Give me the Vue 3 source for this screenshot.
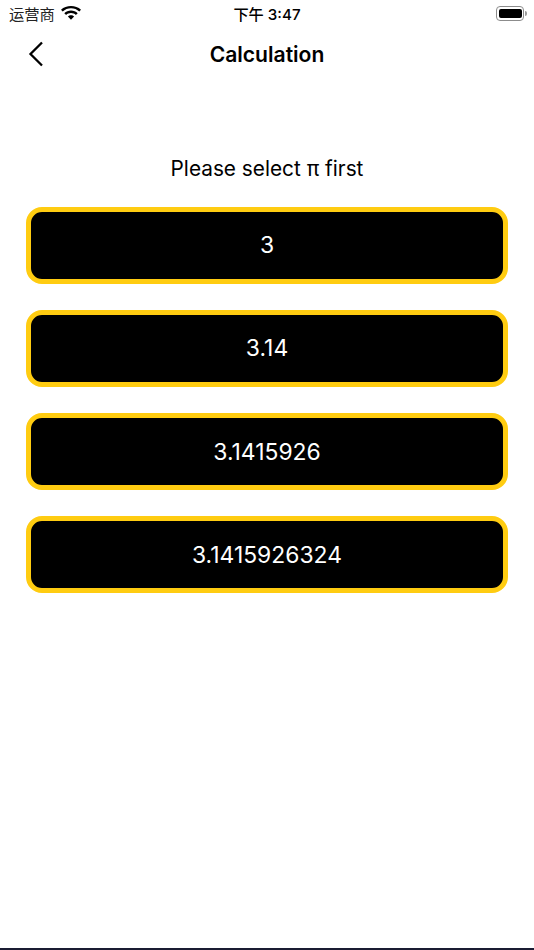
<script setup>
const options = ['3', '3.14', '3.1415926', '3.1415926324']
</script>

<template>
  <div class="screen">
    <div class="status">
      <div class="status-left">
        <span class="carrier">运营商</span>
        <svg class="wifi" width="20" height="15" viewBox="0 0 20 15">
          <path d="M10 2.2c3.2 0 6.1 1.2 8.3 3.3L20 3.7C17.3 1.2 13.800 0 10 0S2.700 1.200 0 3.700l1.700 1.800C3.900 3.400 6.800 2.200 10 2.200z" fill="#000"/>
          <path d="M10 7.100c1.900 0 3.600.7 4.900 1.900l1.800-1.800C14.900 5.500 12.600 4.600 10 4.600s-4.900.9-6.700 2.600L5.100 9c1.300-1.200 3-1.900 4.900-1.900z" fill="#000"/>
          <path d="M10 9.300c-1.200 0-2.300.5-3.100 1.200L10 13.800l3.100-3.300c-.8-.7-1.900-1.200-3.100-1.200z" fill="#000"/>
        </svg>
      </div>
      <span class="time">下午 3:47</span>
      <div class="battery"><span class="battery-fill"></span></div>
    </div>

    <header class="nav">
      <svg class="back" width="16" height="26" viewBox="0 0 16 26">
        <path d="M14 1.500 2.500 13 14 24.500" fill="none" stroke="#000" stroke-width="2.300"/>
      </svg>
      <h1 class="title">Calculation</h1>
    </header>

    <main class="content">
      <p class="prompt">Please select π first</p>
      <div class="options">
        <button v-for="option in options" :key="option" class="option">{{ option }}</button>
      </div>
    </main>

    <div class="home-line"></div>
  </div>
</template>

<style scoped>
.screen {
  width: 534px;
  height: 950px;
  background: #fff;
  display: flex;
  flex-direction: column;
  font-family: Inter, "Noto Sans CJK SC", sans-serif;
  color: #000;
  overflow: hidden;
}
.status {
  height: 27px;
  display: grid;
  grid-template-columns: 1fr auto 1fr;
  align-items: center;
  padding: 0 10px;
}
.status-left {
  display: flex;
  align-items: center;
  gap: 6px;
}
.carrier {
  font-size: 15.300px;
  color: #222;
  margin: -2px 0 0 -1px;
}
.wifi {
  margin-top: 0;
}
.time {
  font-size: 15.200px;
  font-weight: 500;
  margin-top: -1px;
}
.battery {
  justify-self: end;
  width: 28px;
  height: 14.500px;
  box-sizing: border-box;
  border: 1.500px solid #8c8c8c;
  border-radius: 4px;
  padding: 1.500px;
  position: relative;
}
.battery::after {
  content: "";
  position: absolute;
  right: -4px;
  top: 3.500px;
  width: 2px;
  height: 5px;
  background: #9a9a9a;
  border-radius: 0 2px 2px 0;
}
.battery-fill {
  display: block;
  height: 100%;
  background: #000;
  border-radius: 2px;
}
.nav {
  height: 54px;
  display: flex;
  align-items: center;
  justify-content: center;
  position: relative;
}
.back {
  position: absolute;
  left: 28px;
  top: 14px;
}
.title {
  margin: 0;
  font-size: 21.100px;
  font-weight: 600;
}
.content {
  flex: 1;
  padding: 0 26px;
  display: flex;
  flex-direction: column;
}
.prompt {
  margin: 74px 0 0;
  height: 27px;
  line-height: 27px;
  text-align: center;
  font-size: 20.800px;
}
.options {
  margin-top: 24.600px;
  display: flex;
  flex-direction: column;
  gap: 26.300px;
}
.option {
  height: 77px;
  box-sizing: border-box;
  border: 5px solid #ffcc11;
  border-radius: 16px;
  background: #000;
  color: #fff;
  font-family: inherit;
  font-size: 22.900px;
  padding: 0;
}
.home-line {
  height: 2px;
  background: #1a1c33;
}
</style>
